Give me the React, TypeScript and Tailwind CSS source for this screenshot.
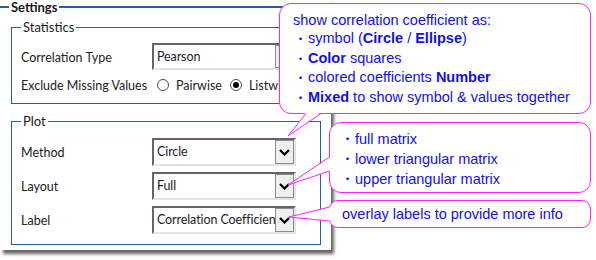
import React from "react";

const Chevron = () => (
  <svg width="11" height="7" viewBox="0 0 11 7">
    <path d="M1 1 L5.5 5.5 L10 1" fill="none" stroke="#000" strokeWidth="2.2" />
  </svg>
);

const Combo = ({ value, tall = true }: { value: string; tall?: boolean }) => (
  <div
    className={`flex w-[144px] ${tall ? "h-[28px]" : "h-[27px]"} border-2 border-t-[#656565] border-l-[#656565] border-r-[#e4e4e4] border-b-[#e4e4e4] bg-white`}
  >
    <span className="flex-1 min-w-0 overflow-hidden whitespace-nowrap pl-[3px] pt-[1px] self-center text-[#1c1c2a] tracking-[-0.1px]">
      {value}
    </span>
    <span className="w-[19px] flex items-center justify-center border border-[#8c8c8c] bg-[#efefef]">
      <Chevron />
    </span>
  </div>
);

const Radio = ({ checked }: { checked?: boolean }) => (
  <span className="w-[12px] h-[12px] rounded-full border border-[#4d4d4d] bg-white flex items-center justify-center">
    {checked && <span className="w-[6px] h-[6px] rounded-full bg-black" />}
  </span>
);

const Row = ({ label, children }: { label: string; children: React.ReactNode }) => (
  <div className="flex items-center">
    <span className="w-[131px] pt-[3px] text-[#222]">{label}</span>
    {children}
  </div>
);

const Bullet = ({ children }: { children: React.ReactNode }) => (
  <div className="flex">
    <span className="inline-block w-[15px] text-center text-[12px] font-['Noto_Sans_CJK_JP',sans-serif]">・</span>
    <span>{children}</span>
  </div>
);

const App = () => {
  return (
    <div className="relative w-[596px] h-[260px] bg-white overflow-hidden font-['Lato',sans-serif] text-[12.5px]">
      {/* settings panel */}
      <div className="w-[331px] h-[250px] bg-white shadow-[3px_4px_3px_rgba(0,0,0,0.6)]">
        <div className="flex items-center h-[14px]">
          <span className="w-[9px] h-[2px] bg-[#1f5fa5]" />
          <span className="px-[2px] font-bold text-[13px] text-[#1a1a1a] leading-[14px]">Settings</span>
          <span className="flex-1 h-[2px] bg-[#1f5fa5]" />
        </div>

        <fieldset className="ml-[11px] mt-[5px] w-[310px] border border-[#1f5fa5] px-[9px] pt-[8px] pb-[10px]">
          <legend className="px-[2px] leading-[16px] text-[13px] text-[#1a1a1a]">Statistics</legend>
          <Row label="Correlation Type">
            <Combo value="Pearson" tall={false} />
          </Row>
          <div className="flex items-center mt-[7px] h-[16px] text-[#222]">
            <span className="w-[136px] pt-[2px]">Exclude Missing Values</span>
            <Radio />
            <span className="ml-[7px] mr-[8px] pt-[2px]">Pairwise</span>
            <Radio checked />
            <span className="ml-[7px] pt-[2px]">Listwise</span>
          </div>
        </fieldset>

        <fieldset className="ml-[11px] mt-[9px] w-[310px] border border-[#1f5fa5] px-[9px] pt-[9px] pb-[10px]">
          <legend className="px-[2px] leading-[16px] text-[13px] text-[#1a1a1a]">Plot</legend>
          <div className="flex flex-col gap-[6px]">
            <Row label="Method">
              <Combo value="Circle" />
            </Row>
            <Row label="Layout">
              <Combo value="Full" />
            </Row>
            <Row label="Label">
              <Combo value="Correlation Coefficient" />
            </Row>
          </div>
        </fieldset>
      </div>

      {/* callouts */}
      <div className="absolute left-[279px] top-[3px] w-[312px] h-[111px] rounded-[12px] border border-[#ff1fff] bg-white pl-[13px] pt-[6px] font-['Liberation_Sans',sans-serif] text-[14.5px] leading-[19.5px] text-[#1010f0]">
        <div className="leading-[18px] pt-[1px]">show correlation coefficient as:</div>
        <div>
          <Bullet>
            symbol (<b>Circle</b> / <b>Ellipse</b>)
          </Bullet>
          <Bullet>
            <b>Color</b> squares
          </Bullet>
          <Bullet>
            colored coefficients <b>Number</b>
          </Bullet>
          <Bullet>
            <b>Mixed</b> to show symbol &amp; values together
          </Bullet>
        </div>
      </div>

      <div className="absolute left-[329px] top-[122px] w-[262px] h-[71px] rounded-[12px] border border-[#ff1fff] bg-white pl-[10px] pt-[6px] font-['Liberation_Sans',sans-serif] text-[14.5px] leading-[20px] text-[#1010f0]">
        <Bullet>full matrix</Bullet>
        <Bullet>lower triangular matrix</Bullet>
        <Bullet>upper triangular matrix</Bullet>
      </div>

      <div className="absolute left-[329px] top-[200px] w-[262px] h-[28px] rounded-[9px] border border-[#ff1fff] bg-white pl-[12px] font-['Liberation_Sans',sans-serif] text-[14.5px] leading-[26px] text-[#1010f0]">
        overlay labels to provide more info
      </div>

      {/* callout tails */}
      <svg className="absolute left-0 top-0 pointer-events-none" width="596" height="260">
        <polygon points="306,112 321,112 288,136" fill="#fff" />
        <polyline points="306,113.5 288,136 321,113.5" fill="none" stroke="#ff1fff" strokeWidth="1" />
        <polygon points="330.5,157 330.5,171 288,185" fill="#fff" />
        <polyline points="329.5,157 288,185 329.5,171" fill="none" stroke="#ff1fff" strokeWidth="1" />
        <polygon points="330.5,207 330.5,221 289,217" fill="#fff" />
        <polyline points="329.5,207 289,217 329.5,221" fill="none" stroke="#ff1fff" strokeWidth="1" />
      </svg>
    </div>
  );
};

export default App;
